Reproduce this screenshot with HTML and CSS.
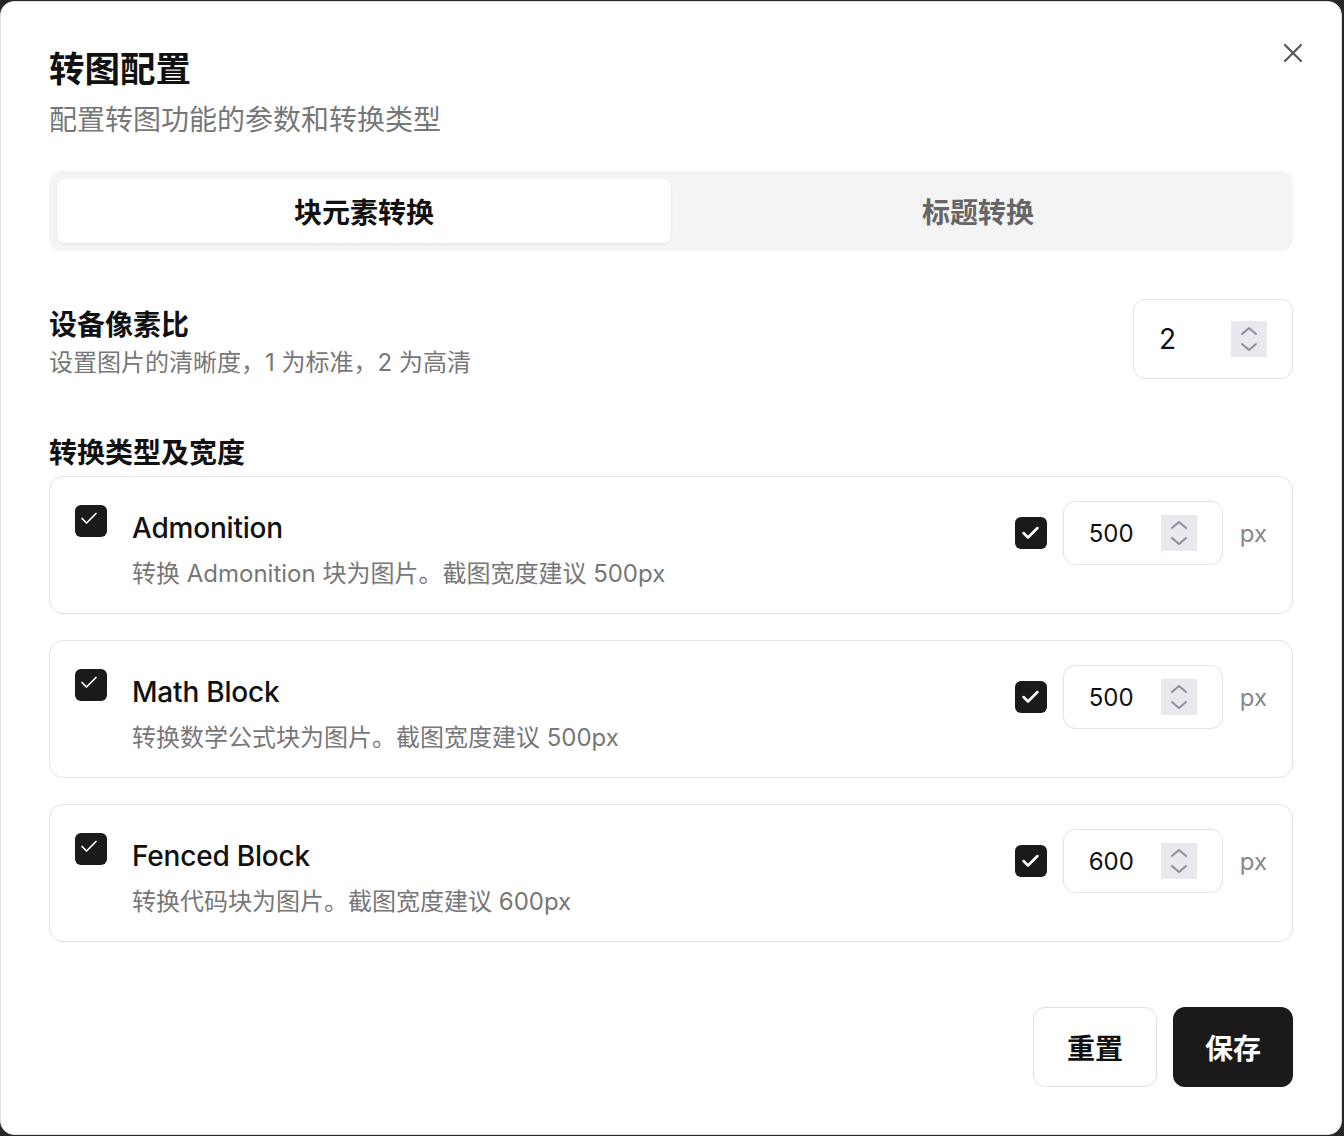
FILE: index.html
```html
<!DOCTYPE html>
<html lang="zh-CN">
<head>
<meta charset="utf-8">
<title>转图配置</title>
<link rel="stylesheet" href="styles.css">
</head>
<body>
<div class="dialog">
  <button class="close" aria-label="关闭">
    <svg width="20" height="20" viewBox="0 0 20 20"><path d="M2 2 L18 18 M18 2 L2 18" stroke="#555" stroke-width="2.2" stroke-linecap="round" fill="none"/></svg>
  </button>
  <header class="head">
    <h1 class="title">转图配置</h1>
    <p class="subtitle">配置转图功能的参数和转换类型</p>
  </header>

  <div class="tabs">
    <div class="tab active">块元素转换</div>
    <div class="tab">标题转换</div>
  </div>

  <div class="setting">
    <div class="setting-text">
      <div class="label">设备像素比</div>
      <div class="desc">设置图片的清晰度，1 为标准，2 为高清</div>
    </div>
    <div class="num big">
      <span class="val">2</span>
      <span class="spin"><svg width="36" height="36" viewBox="0 0 36 36"><path d="M11 13 L18 7 L25 13 M11 23 L18 29 L25 23" stroke="#8e8e9c" stroke-width="2" fill="none" stroke-linecap="round" stroke-linejoin="round"/></svg></span>
    </div>
  </div>

  <div class="label section">转换类型及宽度</div>

  <div class="cards">
    <div class="card">
      <div class="card-left">
        <span class="cb small"><svg width="32" height="32" viewBox="0 0 32 32"><path d="M7 13.5 L11.5 18 L21 8.5" stroke="#fff" stroke-width="1.7" fill="none" stroke-linecap="round" stroke-linejoin="round"/></svg></span>
        <div class="card-text">
          <div class="card-title">Admonition</div>
          <div class="desc">转换 Admonition 块为图片。截图宽度建议 500px</div>
        </div>
      </div>
      <div class="card-right">
        <span class="cb"><svg width="32" height="32" viewBox="0 0 32 32"><path d="M8.5 16 L13 20.5 L22.5 11" stroke="#fff" stroke-width="2.5" fill="none" stroke-linecap="round" stroke-linejoin="round"/></svg></span>
        <div class="num">
          <span class="val">500</span>
          <span class="spin"><svg width="36" height="36" viewBox="0 0 36 36"><path d="M11 13 L18 7 L25 13 M11 23 L18 29 L25 23" stroke="#8e8e9c" stroke-width="2" fill="none" stroke-linecap="round" stroke-linejoin="round"/></svg></span>
        </div>
        <span class="unit">px</span>
      </div>
    </div>

    <div class="card">
      <div class="card-left">
        <span class="cb small"><svg width="32" height="32" viewBox="0 0 32 32"><path d="M7 13.5 L11.5 18 L21 8.5" stroke="#fff" stroke-width="1.7" fill="none" stroke-linecap="round" stroke-linejoin="round"/></svg></span>
        <div class="card-text">
          <div class="card-title">Math Block</div>
          <div class="desc">转换数学公式块为图片。截图宽度建议 500px</div>
        </div>
      </div>
      <div class="card-right">
        <span class="cb"><svg width="32" height="32" viewBox="0 0 32 32"><path d="M8.5 16 L13 20.5 L22.5 11" stroke="#fff" stroke-width="2.5" fill="none" stroke-linecap="round" stroke-linejoin="round"/></svg></span>
        <div class="num">
          <span class="val">500</span>
          <span class="spin"><svg width="36" height="36" viewBox="0 0 36 36"><path d="M11 13 L18 7 L25 13 M11 23 L18 29 L25 23" stroke="#8e8e9c" stroke-width="2" fill="none" stroke-linecap="round" stroke-linejoin="round"/></svg></span>
        </div>
        <span class="unit">px</span>
      </div>
    </div>

    <div class="card">
      <div class="card-left">
        <span class="cb small"><svg width="32" height="32" viewBox="0 0 32 32"><path d="M7 13.5 L11.5 18 L21 8.5" stroke="#fff" stroke-width="1.7" fill="none" stroke-linecap="round" stroke-linejoin="round"/></svg></span>
        <div class="card-text">
          <div class="card-title">Fenced Block</div>
          <div class="desc">转换代码块为图片。截图宽度建议 600px</div>
        </div>
      </div>
      <div class="card-right">
        <span class="cb"><svg width="32" height="32" viewBox="0 0 32 32"><path d="M8.5 16 L13 20.5 L22.5 11" stroke="#fff" stroke-width="2.5" fill="none" stroke-linecap="round" stroke-linejoin="round"/></svg></span>
        <div class="num">
          <span class="val">600</span>
          <span class="spin"><svg width="36" height="36" viewBox="0 0 36 36"><path d="M11 13 L18 7 L25 13 M11 23 L18 29 L25 23" stroke="#8e8e9c" stroke-width="2" fill="none" stroke-linecap="round" stroke-linejoin="round"/></svg></span>
        </div>
        <span class="unit">px</span>
      </div>
    </div>
  </div>

  <footer class="footer">
    <button class="btn outline">重置</button>
    <button class="btn solid">保存</button>
  </footer>
</div>
</body>
</html>
```

FILE: styles.css
```css
* { box-sizing: border-box; }
html, body { margin: 0; padding: 0; }
body {
  background: #262626;
  padding-top: 1px;
  width: 1344px;
  height: 1136px;
  overflow: hidden;
  font-family: Inter, "Noto Sans CJK SC", sans-serif;
  color: #111;
}
.dialog {
  position: relative;
  width: 1342px;
  height: 1134px;
  background: #fff;
  border: 1px solid #dedede;
  border-radius: 14px;
  padding: 46px 48px 47px 48px;
  display: flex;
  flex-direction: column;
}
.close {
  position: absolute;
  top: 40px;
  right: 37px;
  width: 22px;
  height: 22px;
  padding: 0;
  border: 0;
  background: none;
  display: flex;
  align-items: center;
  justify-content: center;
}
.head { display: flex; flex-direction: column; gap: 8px; }
.title {
  margin: 0;
  font-size: 35.5px;
  line-height: 44px;
  font-weight: 700;
  color: #111;
}
.subtitle {
  margin: 0;
  font-size: 28px;
  line-height: 40px;
  color: #777;
}
.tabs {
  margin-top: 31px;
  height: 80px;
  background: #f4f4f4;
  border-radius: 12px;
  padding: 8px;
  display: flex;
}
.tab {
  flex: 1;
  display: flex;
  align-items: center;
  justify-content: center;
  font-size: 28px;
  font-weight: 600;
  color: #666;
  border-radius: 8px;
}
.tab.active {
  background: #fff;
  color: #111;
  box-shadow: 0 1px 3px rgba(0,0,0,0.08);
}
.setting {
  margin-top: 48px;
  display: flex;
  justify-content: space-between;
  align-items: flex-start;
}
.setting-text { padding-top: 6px; }
.label {
  font-size: 28px;
  line-height: 40px;
  font-weight: 700;
  color: #111;
}
.desc {
  font-size: 24px;
  line-height: 36px;
  color: #777;
}
.section { margin-top: 52px; }
.num {
  width: 160px;
  height: 64px;
  border: 1px solid #e2e2e2;
  border-radius: 12px;
  display: flex;
  align-items: center;
  justify-content: space-between;
  padding: 0 25px 0 25px;
}
.num.big { height: 80px; }
.num .val {
  font-size: 24px;
  color: #111;
}
.num.big .val { font-size: 28px; }
.spin {
  width: 36px;
  height: 36px;
  background: #e8e8ee;
  display: block;
}
.spin svg { display: block; }
.cards {
  margin-top: 3px;
  display: flex;
  flex-direction: column;
  gap: 26px;
}
.card {
  height: 138px;
  border: 1px solid #e2e2e2;
  border-radius: 14px;
  padding: 28px 25px 22px 25px;
  display: flex;
  justify-content: space-between;
  align-items: flex-start;
}
.card-left { display: flex; gap: 25px; align-items: flex-start; }
.card-text { padding-top: 3px; }
.card-title {
  font-size: 28px;
  line-height: 40px;
  font-weight: 500;
  color: #111;
  margin-bottom: 8px;
  letter-spacing: -0.2px;
}
.cb {
  width: 32px;
  height: 32px;
  background: #1a1a1a;
  border-radius: 6px;
  display: block;
  flex: none;
}
.cb svg { display: block; }
.card-right {
  margin-top: -4px;
  display: flex;
  align-items: center;
  gap: 16px;
}
.unit {
  font-size: 24px;
  color: #888;
  margin-left: 1px;
}
.footer {
  margin-top: auto;
  display: flex;
  justify-content: flex-end;
  gap: 16px;
}
.btn {
  height: 80px;
  border-radius: 12px;
  font-family: Inter, "Noto Sans CJK SC", sans-serif;
  font-size: 28px;
  font-weight: 700;
  padding: 0 33px;
  cursor: pointer;
}
.btn.outline {
  background: #fff;
  border: 1px solid #e0e0e0;
  color: #111;
}
.btn.solid {
  background: #1a1a1a;
  border: 0;
  color: #fff;
  padding: 0 32px;
}
```
